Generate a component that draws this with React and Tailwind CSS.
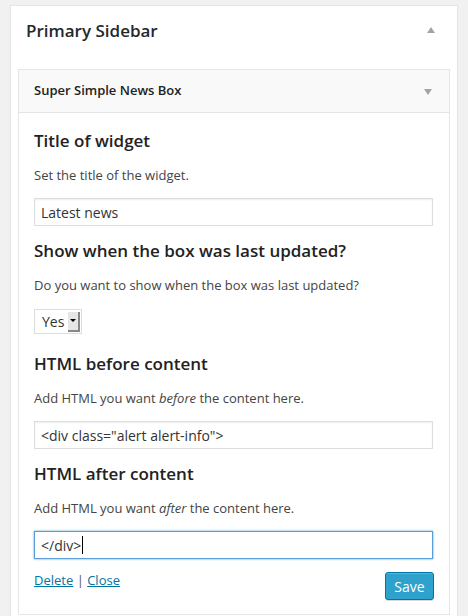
const font = { fontFamily: '"Open Sans", "Noto Sans", sans-serif' };

const Field = ({ label, help, children, top = "mt-[13px]" }) => (
  <div>
    <h3 className={top + " text-[17px] leading-[24px] font-semibold text-[#222]"}>{label}</h3>
    <p className="mt-[12px] text-[13px] leading-[20px] text-[#444]">{help}</p>
    {children}
  </div>
);

const TextInput = ({ value, focused }) => (
  <div
    className={
      "mt-[13px] h-[28px] w-[399px] flex items-center px-[6px] text-[14px] text-[#333] bg-white border " +
      (focused
        ? "border-[#5b9dd9] shadow-[0_0_2px_rgba(30,140,190,0.8)]"
        : "border-[#ddd] shadow-[inset_0_1px_2px_rgba(0,0,0,0.07)]")
    }
  >
    <span>{value}</span>
    {focused && <span className="ml-[1px] h-[18px] w-px bg-black" />}
  </div>
);

const App = () => {
  return (
    <div className="min-h-[616px] bg-[#f1f1f1] pt-[5px] px-[10px] overflow-hidden" style={font}>
      <div className="bg-white border border-[#e5e5e5] shadow-[0_1px_1px_rgba(0,0,0,0.04)] px-[7px] min-h-[640px]">
        <div className="flex items-center justify-between h-[52px] pl-[8px] pr-[15px]">
          <h2 className="text-[17px] font-semibold text-[#23282d] mb-[3px]">Primary Sidebar</h2>
          <span className="mb-[4px] w-0 h-0 border-l-[4px] border-r-[4px] border-b-[6px] border-l-transparent border-r-transparent border-b-[#a0a5aa]" />
        </div>
        <div className="mt-[11px] border border-[#e5e5e5]">
          <div className="flex items-center justify-between h-[43px] bg-[#f9f9f9] border-b border-[#e5e5e5] pl-[15px] pr-[17px]">
            <span className="text-[13px] font-semibold text-[#222]">Super Simple News Box</span>
            <span className="mt-[1px] w-0 h-0 border-l-[4px] border-r-[4px] border-t-[6px] border-l-transparent border-r-transparent border-t-[#a0a5aa]" />
          </div>
          <div className="px-[15px] pt-[3px] pb-[14px]">
            <Field label="Title of widget" help="Set the title of the widget.">
              <TextInput value="Latest news" />
            </Field>
            <Field label="Show when the box was last updated?" help="Do you want to show when the box was last updated?">
              <div className="mt-[14px] h-[25px] w-[48px] border border-[#ddd] bg-white flex items-center pl-[7px] pr-[1px] justify-between">
                <span className="text-[14px] text-[#333]">Yes</span>
                <span className="h-[20px] w-[12px] bg-[#e6e6e6] border-r-2 border-b-2 border-[#888] flex items-center justify-center">
                  <span className="w-0 h-0 border-l-[3px] border-r-[3px] border-t-[3px] border-l-transparent border-r-transparent border-t-black" />
                </span>
              </div>
            </Field>
            <Field
              top="mt-[18px]"
              label="HTML before content"
              help={<>Add HTML you want <em>before</em> the content here.</>}
            >
              <TextInput value={'<div class="alert alert-info">'} />
            </Field>
            <Field
              label="HTML after content"
              help={<>Add HTML you want <em>after</em> the content here.</>}
            >
              <TextInput value="</div>" focused />
            </Field>
            <div className="mt-[11px] flex justify-between items-start">
              <div className="text-[13px] leading-[20px] text-[#555]">
                <a className="text-[#0074a2] underline">Delete</a> | <a className="text-[#0074a2] underline">Close</a>
              </div>
              <button className="mt-[2px] h-[28px] w-[49px] rounded-[3px] bg-[#2ea2cc] border border-[#0074a2] text-white text-[14px] shadow-[inset_0_1px_0_rgba(120,200,230,0.5),0_1px_0_rgba(0,0,0,0.15)]">
                Save
              </button>
            </div>
          </div>
        </div>
      </div>
    </div>
  );
};

export default App;
